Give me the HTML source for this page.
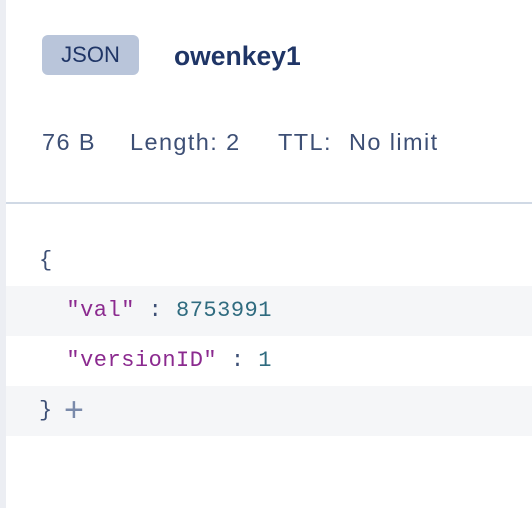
<!DOCTYPE html><html><head><style>
body{margin:0;width:532px;height:508px;background:#fff;position:relative;overflow:hidden;font-family:"Liberation Sans",sans-serif}
.strip{position:absolute;left:0;top:0;width:6px;height:508px;background:#eceef3}
.badge{position:absolute;left:42px;top:35px;width:97px;height:40px;background:#b9c5da;border-radius:6px;color:#1f3566;font-size:22px;line-height:40px;text-align:center}
.title{position:absolute;left:174px;top:40px;font-size:26.5px;font-weight:bold;color:#1f3566;line-height:32px}
.st{position:absolute;top:127px;font-size:23.5px;color:#3d4f75;line-height:30px;white-space:pre;letter-spacing:1.4px}
.hr{position:absolute;left:6px;right:0;top:202px;height:2px;background:#d0d9e5}
.row{position:absolute;left:6px;right:0;height:50px;line-height:50px;padding-left:33px;font-family:"Liberation Mono",monospace;font-size:22px;letter-spacing:0.5px;white-space:pre;color:#3d4f75}
.g{background:#f5f6f8}.s{color:#8b2a8f}.n{color:#2f6b7f}
.plus{position:absolute;left:58px;top:-1px;color:#7a8aaa;font-family:"Liberation Sans",sans-serif;font-size:34px;letter-spacing:0}
</style></head><body>
<div class="strip"></div>
<div class="badge">JSON</div>
<div class="title">owenkey1</div>
<div class="st" style="left:42px">76 B</div>
<div class="st" style="left:130px">Length: 2</div>
<div class="st" style="left:278px">TTL:</div>
<div class="st" style="left:349px">No limit</div>
<div class="hr"></div>
<div class="row" style="top:236px">{</div>
<div class="row g" style="top:286px">  <span class="s">"val"</span> : <span class="n">8753991</span></div>
<div class="row" style="top:336px">  <span class="s">"versionID"</span> : <span class="n">1</span></div>
<div class="row g" style="top:386px">}<span class="plus">+</span></div>
</body></html>
